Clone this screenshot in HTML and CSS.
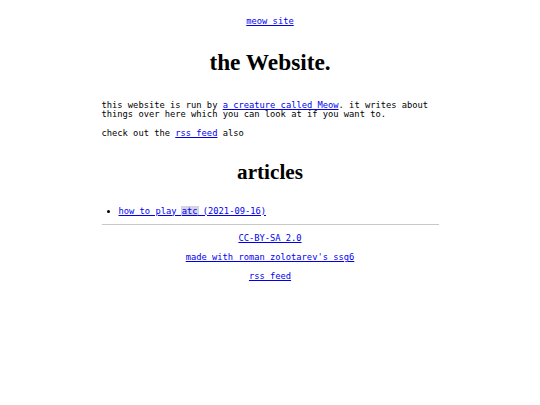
FILE: index.html
```html
<!DOCTYPE html>
<html>
<head>
<meta charset="utf-8">
<title>the Website.</title>
<link rel="stylesheet" href="styles.css">
</head>
<body>
<div class="page">
  <header class="top"><a href="#">meow site</a></header>
  <h1 class="title">the Website.</h1>
  <p>this website is run by <a href="#">a creature called Meow</a>. it writes about things over here which you can look at if you want to.</p>
  <p>check out the <a href="#">rss feed</a> also</p>
  <h2 class="section">articles</h2>
  <ul class="articles">
    <li><a href="#">how to play <span class="hl">atc</span> (2021-09-16)</a></li>
  </ul>
  <hr class="rule">
  <footer class="foot">
    <p><a href="#">CC-BY-SA 2.0</a></p>
    <p><a href="#">made with roman zolotarev's ssg6</a></p>
    <p><a href="#">rss feed</a></p>
  </footer>
</div>
</body>
</html>
```
FILE: styles.css
```css
html, body { margin: 0; padding: 0; background: #fff; }
body {
  font-family: "DejaVu Sans Mono", "Liberation Mono", monospace;
  font-size: 8.75px;
  line-height: 9.5px;
  color: #000;
}
.page {
  width: 337px;
  margin: 0 auto;
  padding-top: 17px;
}
a { color: #0000ee; }
.top { text-align: center; }
.title {
  font-family: "Liberation Serif", serif;
  font-weight: bold;
  font-size: 23.3px;
  line-height: 27px;
  text-align: center;
  margin: 22px 0 25px;
}
p { margin: 0 0 9.5px; }
.section {
  font-family: "Liberation Serif", serif;
  font-weight: bold;
  font-size: 21.2px;
  line-height: 25px;
  text-align: center;
  margin: 21px 0 22px;
}
.articles { margin: 0; padding-left: 17px; }
.hl { background: #d4d4e6; padding: 0 1px; margin: 0 -1px; }
.rule {
  border: 0;
  border-top: 1px solid #c8c8c8;
  margin: 8px 0 9px;
}
.foot { text-align: center; }
.foot p { margin: 0 0 9.5px; }
```
